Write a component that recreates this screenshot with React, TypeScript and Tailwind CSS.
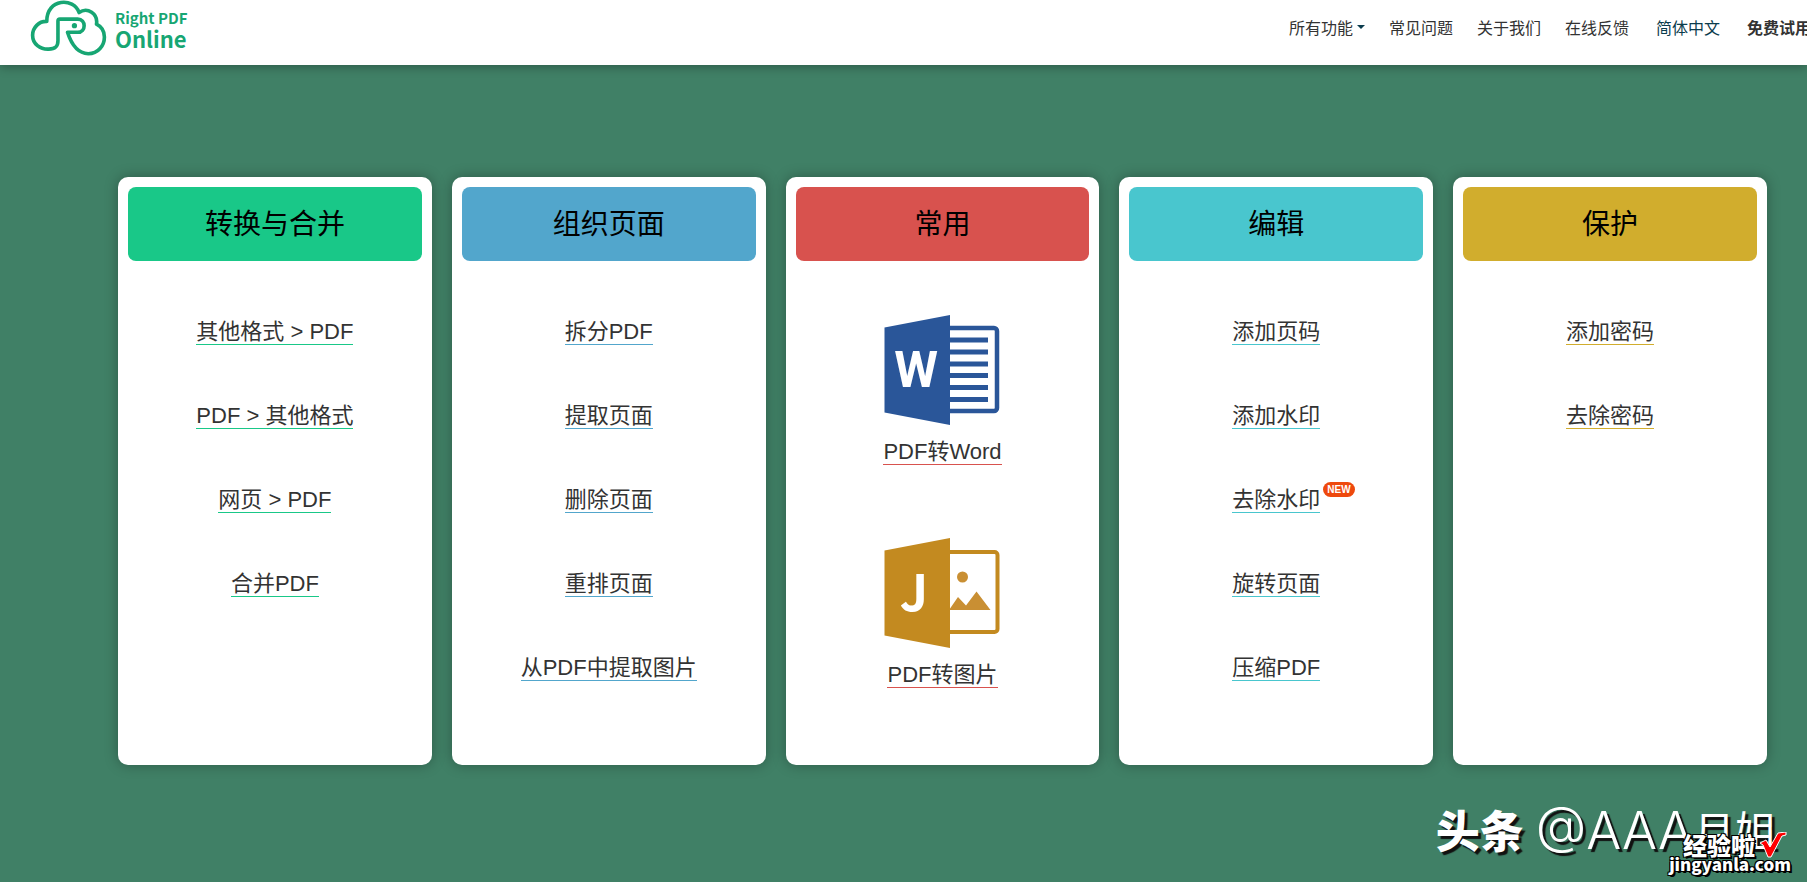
import type { ReactNode } from "react";

type Tool = { label: string; isNew?: boolean; icon?: ReactNode };
type Group = { title: string; head: string; line: string; tools: Tool[] };

function WordIcon() {
  return (
    <svg viewBox="0 0 116 110" className="w-[116px] h-[110px]" aria-hidden="true">
      <rect x="50" y="13" width="63" height="83" rx="3" fill="#fff" stroke="#2a5699" strokeWidth="4.5" />
      {[25, 37, 49, 60.5, 72.5, 84.5].map((y) => (
        <line key={y} x1="60" x2="104" y1={y} y2={y} stroke="#2a5699" strokeWidth="5" />
      ))}
      <path d="M.5 12.5 66 0v110L.5 97.5z" fill="#2a5699" />
      <text x="32" y="72" textAnchor="middle" fill="#fff" fontSize="50" fontWeight="700" fontFamily="Roboto, sans-serif">
        W
      </text>
    </svg>
  );
}

function ImageIcon() {
  return (
    <svg viewBox="0 0 116 110" className="w-[116px] h-[110px]" aria-hidden="true">
      <rect x="50" y="14" width="63.5" height="80" rx="3" fill="#fff" stroke="#c38a20" strokeWidth="4" />
      <circle cx="78.5" cy="39" r="5.5" fill="#c98f33" />
      <path d="M65 72 74 59l8 8.5L92.5 53.5 106.5 72z" fill="#c98f33" />
      <path d="M.5 12.5 66 0v110L.5 97.5z" fill="#c38a20" />
      <text x="30" y="73" textAnchor="middle" fill="#fff" fontSize="50" fontWeight="700" fontFamily="'Noto Sans CJK SC', sans-serif">
        J
      </text>
    </svg>
  );
}

const GROUPS: Group[] = [
  {
    title: "转换与合并",
    head: "bg-[#19c888]",
    line: "border-[#19c888]",
    tools: [{ label: "其他格式 > PDF" }, { label: "PDF > 其他格式" }, { label: "网页 > PDF" }, { label: "合并PDF" }],
  },
  {
    title: "组织页面",
    head: "bg-[#52a6cc]",
    line: "border-[#52a6cc]",
    tools: [
      { label: "拆分PDF" },
      { label: "提取页面" },
      { label: "删除页面" },
      { label: "重排页面" },
      { label: "从PDF中提取图片" },
    ],
  },
  {
    title: "常用",
    head: "bg-[#d8524e]",
    line: "border-[#d8524e]",
    tools: [
      { label: "PDF转Word", icon: <WordIcon /> },
      { label: "PDF转图片", icon: <ImageIcon /> },
    ],
  },
  {
    title: "编辑",
    head: "bg-[#49c6ce]",
    line: "border-[#49c6ce]",
    tools: [
      { label: "添加页码" },
      { label: "添加水印" },
      { label: "去除水印", isNew: true },
      { label: "旋转页面" },
      { label: "压缩PDF" },
    ],
  },
  {
    title: "保护",
    head: "bg-[#d1ad2d]",
    line: "border-[#d1ad2d]",
    tools: [{ label: "添加密码" }, { label: "去除密码" }],
  },
];

function Logo() {
  return (
    <a href="#" className="flex items-center gap-2 text-[#17a673] shrink-0">
      <svg viewBox="90 0 232 170" className="w-[77px] h-14" fill="none" stroke="currentColor" aria-hidden="true">
        <path
          d="M180 58H234C260 58 260 98 234 98H203C212 126 228 162 266 163C296 163 315 138 315 112C315 94 305 80 291 73C296 42 264 20 238 38C222 -8 140 -6 140 65C116 64 97 84 97 107C97 134 120 150 146 149C166 149 174 142 174 124V64Q174 58 180 58Z"
          strokeWidth="11"
          strokeLinejoin="round"
        />
        <circle cx="224" cy="78" r="8" fill="currentColor" stroke="none" />
      </svg>
      <span className="flex flex-col font-bold">
        <span className="text-[15px] leading-5">Right PDF</span>
        <span className="text-[22px] leading-5">Online</span>
      </span>
    </a>
  );
}

function Header() {
  return (
    <header className="relative flex items-start justify-between h-[65px] pl-[30px] overflow-x-clip bg-white shadow-[0_2px_10px_rgba(0,0,0,0.3)] font-['Noto_Sans_CJK_SC',sans-serif]">
      <Logo />
      <nav className="flex gap-6 pt-[15px] -mr-1 text-base leading-6 text-[#333] whitespace-nowrap shrink-0">
        <button type="button" className="flex items-center gap-1">
          所有功能
          <svg viewBox="0 0 8 4" className="w-2 h-1" aria-hidden="true">
            <path d="M0 0h8L4 4z" fill="#0b3c4d" />
          </svg>
        </button>
        <a href="#">常见问题</a>
        <a href="#">关于我们</a>
        <a href="#">在线反馈</a>
        <a href="#" className="mx-[3px] text-[#0b3c4d]">简体中文</a>
        <a href="#" className="font-bold">免费试用</a>
      </nav>
    </header>
  );
}

function ToolLink({ tool, line }: { tool: Tool; line: string }) {
  return (
    <a href="#" className={`relative border-b text-[22px] leading-[25px] text-[#333] whitespace-nowrap ${line}`}>
      {tool.label}
      {tool.isNew && (
        <span className="absolute left-full -top-[5px] ml-[3px] px-1 rounded-full bg-[#ee490d] text-[10px] leading-[15px] font-bold text-white">
          NEW
        </span>
      )}
    </a>
  );
}

function Card({ group }: { group: Group }) {
  return (
    <section className="p-2.5 pb-[55px] rounded-[10px] bg-white shadow-[0_0_14px_rgba(0,0,0,0.3)]">
      <h2 className={`flex items-center justify-center h-[74px] pt-0.5 rounded-lg text-[28px] text-black ${group.head}`}>
        {group.title}
      </h2>
      <ul className="pt-[29px]">
        {group.tools.map((tool) =>
          tool.icon ? (
            <li key={tool.label} className="flex flex-col items-center gap-3.5 pt-[25px] pb-12 last:pb-0">
              {tool.icon}
              <ToolLink tool={tool} line={group.line} />
            </li>
          ) : (
            <li key={tool.label} className="flex items-center justify-center h-[84px]">
              <ToolLink tool={tool} line={group.line} />
            </li>
          )
        )}
      </ul>
    </section>
  );
}

function Watermarks() {
  return (
    <div className="absolute right-4 bottom-0 w-[360px] h-[90px] text-white whitespace-nowrap font-['Noto_Sans_CJK_SC',sans-serif]">
      <p className="absolute right-3.5 top-0 flex items-center gap-3 leading-[70px] [text-shadow:3px_3px_1px_#111]">
        <span className="text-[44px] font-black">头条</span>
        <span className="flex items-center">
          <span className="pt-1 text-[52px] leading-[70px] font-light font-['Inter',sans-serif]">@AAA</span>
          <span className="text-[42px]">月姐</span>
        </span>
      </p>
      <p className="absolute right-0 bottom-3 flex flex-col items-end font-black [text-shadow:-1px_-1px_0_#000,1px_-1px_0_#000,-1px_1px_0_#000,1px_1px_0_#000,2px_2px_0_#000]">
        <span className="flex items-center text-2xl leading-6">
          经验啦
          <svg viewBox="0 0 28 26" className="w-7 h-[26px] mx-1" aria-hidden="true">
            <path d="M1 11 7 8l4 7L19 1l8-1v3l-4 1-11 21H9L4 13z" fill="#f00" stroke="#fff" strokeWidth="1" />
          </svg>
        </span>
        <span className="text-[17px] leading-3">jingyanla.com</span>
      </p>
    </div>
  );
}

export default function App() {
  return (
    <div className="relative min-h-screen overflow-x-clip bg-[#408066] font-['Liberation_Sans','Noto_Sans_CJK_SC',sans-serif]">
      <Header />
      <main className="grid grid-cols-5 gap-5 pt-28 pl-[118px] pr-10 pb-[117px]">
        {GROUPS.map((group) => (
          <Card key={group.title} group={group} />
        ))}
      </main>
      <Watermarks />
    </div>
  );
}
